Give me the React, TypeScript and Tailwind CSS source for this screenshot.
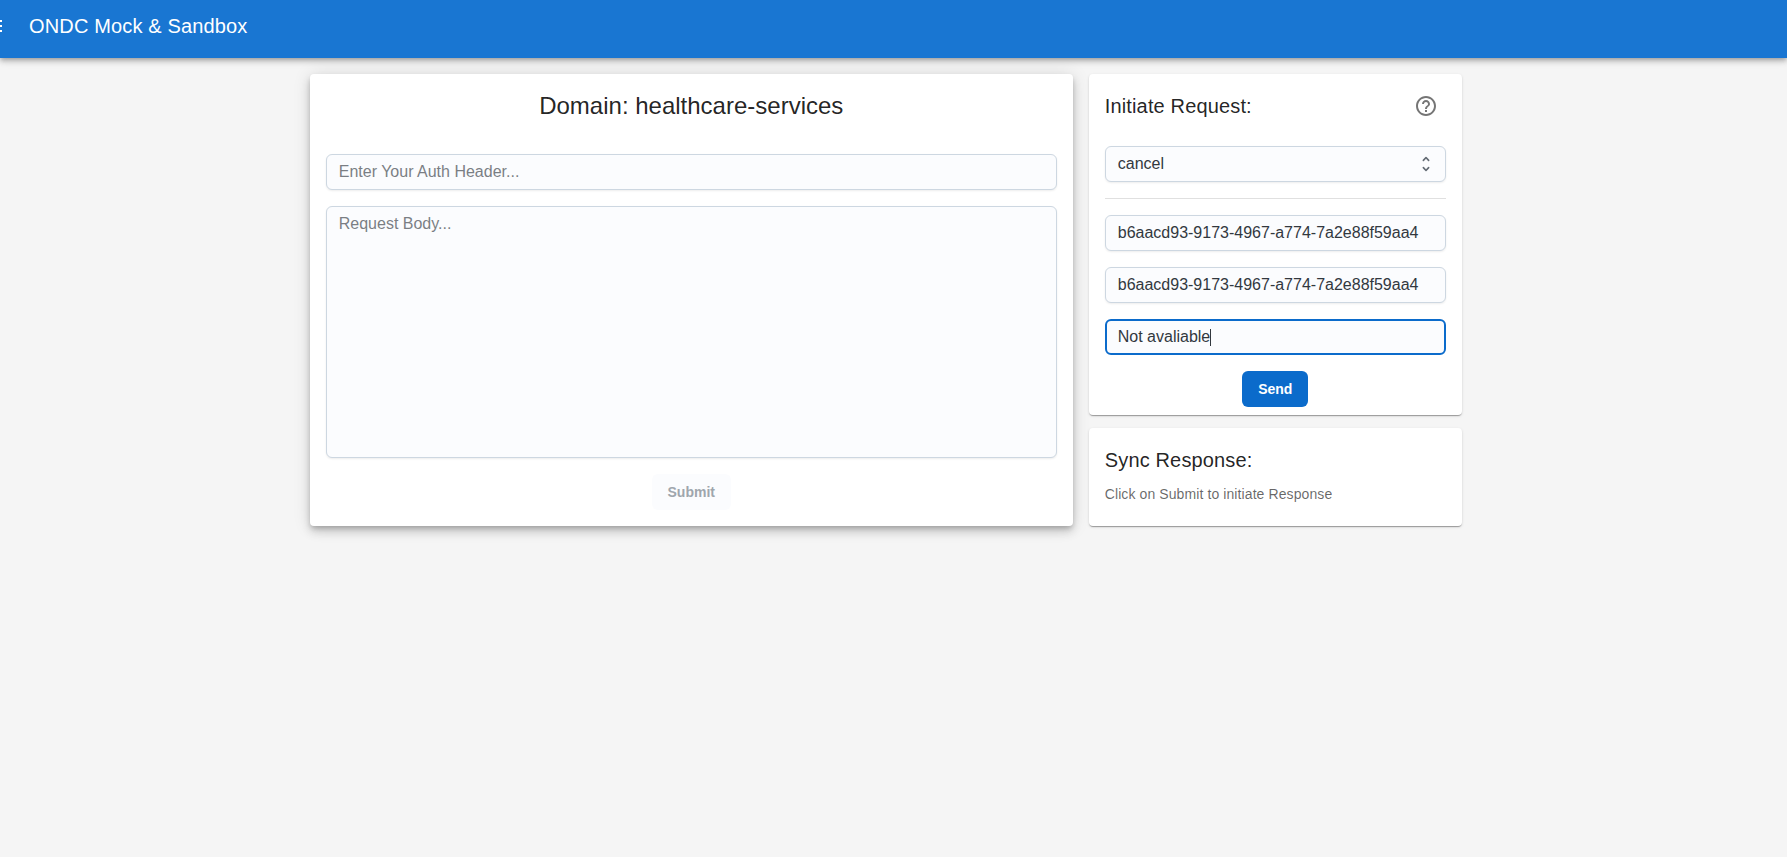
import { MdHelpOutline, MdMenu } from "react-icons/md";

const FIELD =
  "block w-full rounded-md border border-[#cdd7e1] bg-[#fbfcfe] px-3 text-base text-[#32383e] shadow-[0_1px_2px_0_rgba(21,21,21,0.08)] outline-none placeholder:text-[#32383e] placeholder:opacity-[0.64]";

const CARD =
  "rounded bg-white shadow-[0px_2px_1px_-1px_rgba(0,0,0,0.2),0px_1px_1px_0px_rgba(0,0,0,0.14),0px_1px_3px_0px_rgba(0,0,0,0.12)]";

function UnfoldIcon() {
  return (
    <svg viewBox="0 0 24 24" className="size-5 fill-[#636b74]">
      <path d="m12 5.83 2.46 2.46c.39.39 1.02.39 1.41 0 .39-.39.39-1.02 0-1.41L12.7 3.7a.996.996 0 0 0-1.41 0L8.12 6.88c-.39.39-.39 1.02 0 1.41.39.39 1.02.39 1.41 0L12 5.83zm0 12.34-2.46-2.46a.996.996 0 0 0-1.41 0c-.39.39-.39 1.02 0 1.41l3.17 3.18c.39.39 1.02.39 1.41 0l3.17-3.17c.39-.39.39-1.02 0-1.41a.996.996 0 0 0-1.41 0L12 18.17z" />
    </svg>
  );
}

function Header() {
  return (
    <header className="z-10 flex h-[58px] items-start bg-[#1976d2] text-white shadow-[0px_2px_4px_-1px_rgba(0,0,0,0.2),0px_4px_5px_0px_rgba(0,0,0,0.14),0px_1px_10px_0px_rgba(0,0,0,0.12)]">
      <button className="-ml-[19px] mt-3.5" aria-label="menu">
        <MdMenu className="size-6" />
      </button>
      <h1 className="ml-6 mt-2.5 text-xl leading-8 tracking-[0.0075em]">ONDC Mock &amp; Sandbox</h1>
    </header>
  );
}

function RequestForm() {
  return (
    <section className="flex h-[452px] w-[763px] flex-col items-center rounded bg-white p-4 shadow-[0px_3px_5px_-1px_rgba(0,0,0,0.2),0px_6px_10px_0px_rgba(0,0,0,0.14),0px_1px_18px_0px_rgba(0,0,0,0.12)]">
      <h2 className="text-2xl leading-8 text-black/87">Domain: healthcare-services</h2>
      <input className={`${FIELD} mt-8 h-9`} placeholder="Enter Your Auth Header..." />
      <textarea className={`${FIELD} mt-4 h-[252px] resize-none py-[5px]`} placeholder="Request Body..." />
      <button disabled className="mt-4 h-9 rounded-md bg-[#fbfcfe] px-4 text-sm font-semibold text-[#9fa6ad]">
        Submit
      </button>
    </section>
  );
}

function InitiateRequest() {
  return (
    <section className={`${CARD} flex h-[341px] flex-col items-center px-4 pt-4`}>
      <div className="flex h-8 w-full items-center justify-between pr-2">
        <h3 className="text-xl leading-8 tracking-[0.0075em] text-black/87">Initiate Request:</h3>
        <MdHelpOutline className="size-6 text-black/54" />
      </div>
      <button className={`${FIELD} mt-6 flex! h-9 shrink-0 items-center justify-between pr-[9px]!`}>
        <span>cancel</span>
        <UnfoldIcon />
      </button>
      <hr className="mt-4 w-full border-black/12" />
      <input className={`${FIELD} mt-4 h-9 shrink-0`} defaultValue="b6aacd93-9173-4967-a774-7a2e88f59aa4" />
      <input className={`${FIELD} mt-4 h-9 shrink-0`} defaultValue="b6aacd93-9173-4967-a774-7a2e88f59aa4" />
      <div className="mt-4 flex h-9 w-full shrink-0 items-center rounded-md border-2 border-[#0b6bcb] bg-[#fbfcfe] px-[11px] text-base text-[#32383e]">
        <span>Not avaliable</span>
        <span className="-ml-[0.5px] h-[17px] w-px bg-[#32383e]" />
      </div>
      <button className="mt-4 h-9 shrink-0 rounded-md bg-[#0b6bcb] px-4 text-sm font-semibold text-white">Send</button>
    </section>
  );
}

function SyncResponse() {
  return (
    <section className={`${CARD} h-[98px] p-4`}>
      <h3 className="text-xl leading-8 tracking-[0.0075em] text-black/87">Sync Response:</h3>
      <p className="mt-2 text-sm leading-5 tracking-[0.0068em] text-black/60">Click on Submit to initiate Response</p>
    </section>
  );
}

export default function App() {
  return (
    <div className="flex min-h-screen flex-col overflow-hidden bg-[#f5f5f5] font-['Liberation_Sans',Arial,sans-serif]">
      <Header />
      <main className="flex gap-4 pl-[309.75px] pt-4">
        <RequestForm />
        <div className="flex w-[373px] flex-col gap-[13px]">
          <InitiateRequest />
          <SyncResponse />
        </div>
      </main>
    </div>
  );
}
